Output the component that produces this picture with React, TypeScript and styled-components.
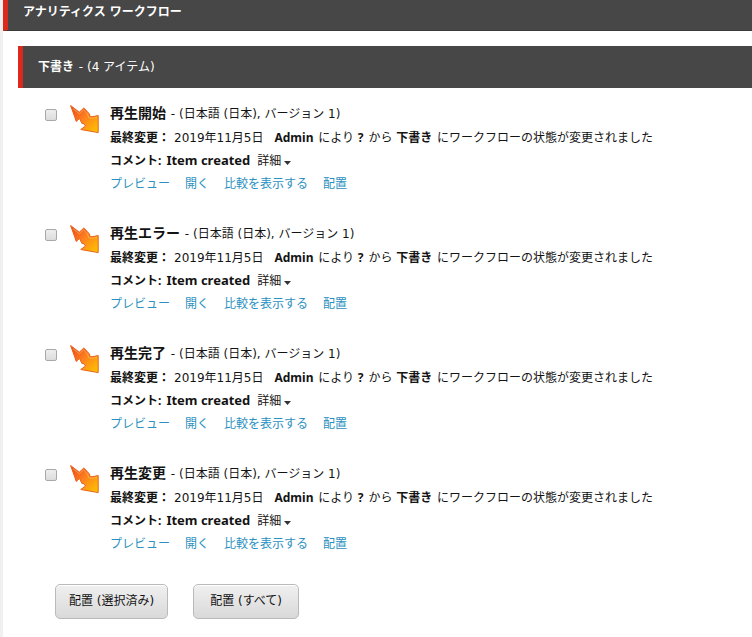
import React from "react";
import styled, { createGlobalStyle } from "styled-components";

const GlobalStyle = createGlobalStyle`
  * { box-sizing: border-box; }
  body {
    margin: 0;
    background: #fff;
    color: #131313;
    font-family: "DejaVu Sans", "Noto Sans CJK JP", sans-serif;
    font-size: 12px;
    line-height: 23px;
  }
`;

const Strong = styled.b`
  margin-right: 1px;
  font-family: "Noto Sans", "Noto Sans CJK JP", sans-serif;
  line-height: 1;
`;

const Page = styled.main`
  min-height: 100vh;
  border-left: 3px solid #f0f0f0;
  overflow: hidden;
`;

const PageHeader = styled.h1`
  margin: 0;
  height: 31px;
  padding: 0 15px 6px;
  display: flex;
  align-items: center;
  border-left: 5px solid #dc291e;
  border-bottom: 1px solid #3b3b3b;
  background: #474747;
  color: #fff;
  font-size: 12px;
  font-weight: 700;
`;

const State = styled.section`
  margin: 15px 0 0 15px;
`;

const StateHeader = styled.h2`
  margin: 0;
  height: 42px;
  padding: 0 15px;
  display: flex;
  align-items: center;
  border-left: 5px solid #dc291e;
  background: #474747;
  color: #fff;
  font-size: 12px;
  font-weight: 400;
  white-space: pre;
`;

const Items = styled.ul`
  list-style: none;
  margin: 0;
  padding: 13px 15px 0 27px;
  display: flex;
  flex-direction: column;
  gap: 25px;
`;

const Item = styled.li`
  display: flex;
  align-items: flex-start;
`;

const Check = styled.input`
  appearance: none;
  flex: none;
  width: 12px;
  height: 12px;
  margin: 8px 13px 0 0;
  border: 1px solid #a9a9a9;
  border-radius: 2px;
  background: linear-gradient(#eee, #dcdcdc);
  &:checked { background: #555; }
`;

const Arrow = styled.svg`
  flex: none;
  width: 30px;
  height: 30px;
  margin: 4px 10px 0 0;
`;

const Details = styled.div`
  min-width: 0;
  padding-top: 1px;
`;

const Title = styled.label`
  display: block;
  height: 25px;
  line-height: 25px;
`;

const TitleName = styled(Strong)`
  font-size: 14px;
`;

const Line = styled.p`
  margin: 0;
`;

const DateText = styled.time`
  margin: 0 11px 0 3px;
`;

const Comment = styled(Strong)`
  margin: 0 7px 0 4px;
  font-size: 13px;
`;

const MoreButton = styled.button`
  padding: 0;
  border: 0;
  background: none;
  color: inherit;
  font: inherit;
  display: inline-flex;
  align-items: center;
  gap: 3px;
`;

const Caret = styled.svg`
  width: 7px;
  height: 4px;
  margin-top: 3px;
`;

const Commands = styled.nav`
  display: flex;
  gap: 15px;
`;

const Command = styled.a`
  color: #2b90bf;
  text-decoration: none;
`;

const Actions = styled.div`
  display: flex;
  gap: 25px;
  padding: 28px 0 19px 37px;
`;

const Action = styled.button<{ $wide?: boolean }>`
  height: 35px;
  padding: 0 ${(p) => (p.$wide ? 16 : 13)}px;
  border: 1px solid #bababa;
  border-radius: 5px;
  background: linear-gradient(#f0f0f0, #d9d9d9);
  box-shadow: inset 0 1px 0 #fff;
  color: #131313;
  font: inherit;
`;

const titles = ["再生開始", "再生エラー", "再生完了", "再生変更"];
const commands = ["プレビュー", "開く", "比較を表示する", "配置"];

function WorkflowItem({ title, index }: { title: string; index: number }) {
  const id = `item-${index}`;
  const fill = `flame-${index}`;
  return (
    <Item>
      <Check type="checkbox" id={id} />
      <Arrow viewBox="0 0 30 30" aria-hidden="true">
        <defs>
          <linearGradient id={fill} x1="0" y1="0" x2="1" y2="1">
            <stop offset="0" stopColor="#e8401c" />
            <stop offset="0.45" stopColor="#ff7d1e" />
            <stop offset="1" stopColor="#ffc800" />
          </linearGradient>
        </defs>
        <path
          d="M0.6 0.5L9.3 7.2L13.8 3L17 6.2Q20 9 20.2 11.5L22 11.8L28.2 10.5V27.6L10.8 24.5L15.5 21Q14 17.6 12 18.5L9.5 13.4L6.3 16.5Z"
          fill={`url(#${fill})`}
          stroke="#e8641c"
          strokeLinejoin="round"
        />
        <path
          d="M3 3.8L9.3 8.8L13.6 4.8Q18.6 9 18.8 12.8L21.8 13.2L27 12.2"
          fill="none"
          stroke="#ffb45c"
          strokeOpacity="0.7"
        />
      </Arrow>
      <Details>
        <Title htmlFor={id}>
          <TitleName>{title}</TitleName> - (日本語 (日本), バージョン 1)
        </Title>
        <Line>
          <Strong>最終変更：</Strong>
          <DateText dateTime="2019-11-05">2019年11月5日</DateText>
          <Strong>Admin</Strong> により <Strong>?</Strong> から <Strong>下書き</Strong>{" "}
          にワークフローの状態が変更されました
        </Line>
        <Line>
          <Strong>コメント:</Strong>
          <Comment>Item created</Comment>
          <MoreButton type="button">
            詳細
            <Caret viewBox="0 0 7 4" aria-hidden="true">
              <path d="M0 0H7L3.5 4Z" fill="#333" />
            </Caret>
          </MoreButton>
        </Line>
        <Commands>
          {commands.map((c) => (
            <Command href="#" key={c}>{c}</Command>
          ))}
        </Commands>
      </Details>
    </Item>
  );
}

export default function App() {
  return (
    <>
      <GlobalStyle />
      <Page>
        <PageHeader>アナリティクス ワークフロー</PageHeader>
        <State>
          <StateHeader><Strong>下書き</Strong> - (4 アイテム)</StateHeader>
          <Items>
            {titles.map((t, i) => (
              <WorkflowItem key={t} title={t} index={i} />
            ))}
          </Items>
          <Actions>
            <Action type="button">配置 (選択済み)</Action>
            <Action type="button" $wide>配置 (すべて)</Action>
          </Actions>
        </State>
      </Page>
    </>
  );
}
